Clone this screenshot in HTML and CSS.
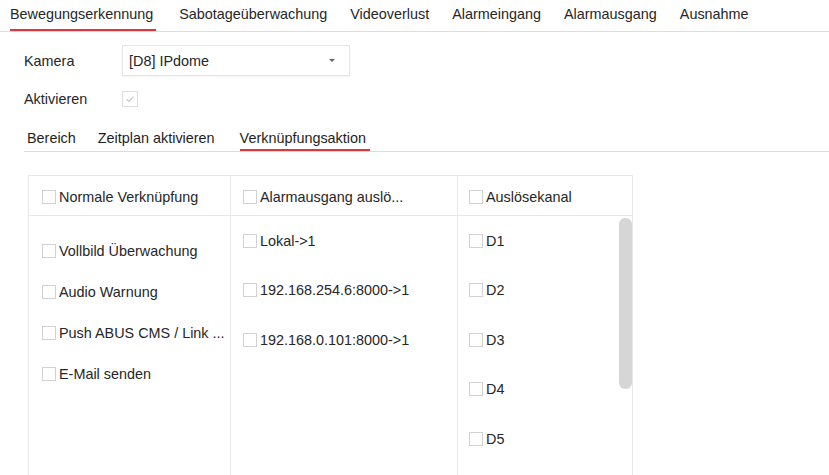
FILE: index.html
```html
<!DOCTYPE html>
<html lang="de">
<head>
    <meta charset="UTF-8">
    <title>Bewegungserkennung</title>
    <link rel="stylesheet" href="styles.css">
</head>
<body>
    <nav class="tabs">
        <span class="tab active">Bewegungserkennung</span>
        <span class="tab">Sabotageüberwachung</span>
        <span class="tab">Videoverlust</span>
        <span class="tab">Alarmeingang</span>
        <span class="tab">Alarmausgang</span>
        <span class="tab">Ausnahme</span>
    </nav>

    <div class="form">
        <div class="field">
            <label>Kamera</label>
            <div class="select">
                <span>[D8] IPdome</span>
                <span class="caret"></span>
            </div>
        </div>
        <div class="field field-check">
            <label>Aktivieren</label>
            <span class="check checked">
                <svg viewBox="0 0 16 16" width="16" height="16"><path d="M4 8.2l2.6 2.6L12 5.2" fill="none" stroke="#c4c4c4" stroke-width="1.3"/></svg>
            </span>
        </div>

        <div class="subtabs">
            <span class="subtab">Bereich</span>
            <span class="subtab">Zeitplan aktivieren</span>
            <span class="subtab active">Verknüpfungsaktion</span>
        </div>

        <div class="link-table">
            <div class="col col-normal">
                <div class="col-head"><span class="box"></span>Normale Verknüpfung</div>
                <div class="col-body">
                    <div class="item"><span class="box"></span>Vollbild Überwachung</div>
                    <div class="item"><span class="box"></span>Audio Warnung</div>
                    <div class="item"><span class="box"></span>Push ABUS CMS / Link ...</div>
                    <div class="item"><span class="box"></span>E-Mail senden</div>
                </div>
            </div>
            <div class="col col-alarm">
                <div class="col-head"><span class="box"></span>Alarmausgang auslö...</div>
                <div class="col-body">
                    <div class="item"><span class="box"></span>Lokal-&gt;1</div>
                    <div class="item"><span class="box"></span>192.168.254.6:8000-&gt;1</div>
                    <div class="item"><span class="box"></span>192.168.0.101:8000-&gt;1</div>
                </div>
            </div>
            <div class="col col-channel">
                <div class="col-head"><span class="box"></span>Auslösekanal</div>
                <div class="col-body">
                    <div class="item"><span class="box"></span>D1</div>
                    <div class="item"><span class="box"></span>D2</div>
                    <div class="item"><span class="box"></span>D3</div>
                    <div class="item"><span class="box"></span>D4</div>
                    <div class="item"><span class="box"></span>D5</div>
                    <span class="scroll-thumb"></span>
                </div>
            </div>
        </div>
    </div>
</body>
</html>
```

FILE: styles.css
```css
body {
    margin: 0;
    font-family: "Liberation Sans", Arial, sans-serif;
    font-size: 14.4px;
    color: #262626;
    background-color: #fff;
    overflow: hidden;
}

.tabs {
    display: flex;
    gap: 23px;
    padding-left: 10px;
    border-bottom: 1px solid #dcdcdc;
}

.tab {
    box-sizing: border-box;
    height: 31px;
    line-height: 29px;
    border-bottom: 2px solid transparent;
}

.tab.active {
    border-bottom-color: #e0353c;
    padding-right: 3px;
}

.form {
    padding-left: 24px;
}

.field {
    display: flex;
    align-items: center;
    margin-top: 13px;
}

.field label {
    width: 98px;
}

.select {
    box-sizing: border-box;
    width: 228px;
    height: 31px;
    display: flex;
    align-items: center;
    justify-content: space-between;
    padding: 0 14px 0 6px;
    border: 1px solid #e6e6e6;
    box-shadow: 0 1px 2px rgba(0, 0, 0, 0.05);
}

.caret {
    width: 0;
    height: 0;
    border-left: 3px solid transparent;
    border-right: 3px solid transparent;
    border-top: 3px solid #666;
}

.field-check {
    margin-top: 15px;
}

.check {
    box-sizing: border-box;
    width: 16px;
    height: 16px;
    border: 1px solid #dedede;
    display: flex;
    align-items: center;
    justify-content: center;
}

.check svg {
    display: block;
}

.subtabs {
    display: flex;
    gap: 22px;
    margin-top: 23px;
    padding-left: 3px;
    border-bottom: 1px solid #dcdcdc;
}

.subtab {
    line-height: 16px;
    padding-bottom: 3px;
    border-bottom: 2px solid transparent;
    color: #1e1e1e;
}

.subtab.active {
    margin-left: 3px;
    border-bottom-color: #e0353c;
    padding-right: 4px;
}

.link-table {
    display: flex;
    width: 604px;
    margin: 23px 0 0 4px;
    border: 1px solid #e8e8e8;
    border-right: none;
}

.col {
    box-sizing: border-box;
    border-right: 1px solid #e8e8e8;
}

.col-normal {
    width: 202px;
}

.col-alarm {
    width: 227px;
}

.col-channel {
    width: 175px;
}

.col-head {
    display: flex;
    align-items: center;
    height: 40px;
    padding: 3px 0 0 13px;
    box-sizing: border-box;
    border-bottom: 1px solid #e8e8e8;
}

.col-body {
    position: relative;
    height: 262px;
}

.box {
    box-sizing: border-box;
    width: 14px;
    height: 14px;
    border: 1px solid #d2d2d2;
    margin-right: 3px;
    flex-shrink: 0;
}

.item {
    display: flex;
    align-items: center;
    white-space: nowrap;
}

.col-normal .col-body {
    padding-top: 14px;
}

.col-normal .item {
    height: 41px;
    padding-left: 13px;
}

.col-alarm .item,
.col-channel .item {
    height: 49.5px;
}

.col-alarm .item {
    padding-left: 12px;
}

.col-channel .item {
    padding-left: 11px;
}

.col-channel .col-head {
    padding-left: 11px;
}

.col-alarm .col-head {
    padding-left: 12px;
}

.scroll-thumb {
    position: absolute;
    top: 2px;
    right: 0;
    width: 13px;
    height: 171px;
    border-radius: 6px;
    background-color: #d6d6d6;
}
```
